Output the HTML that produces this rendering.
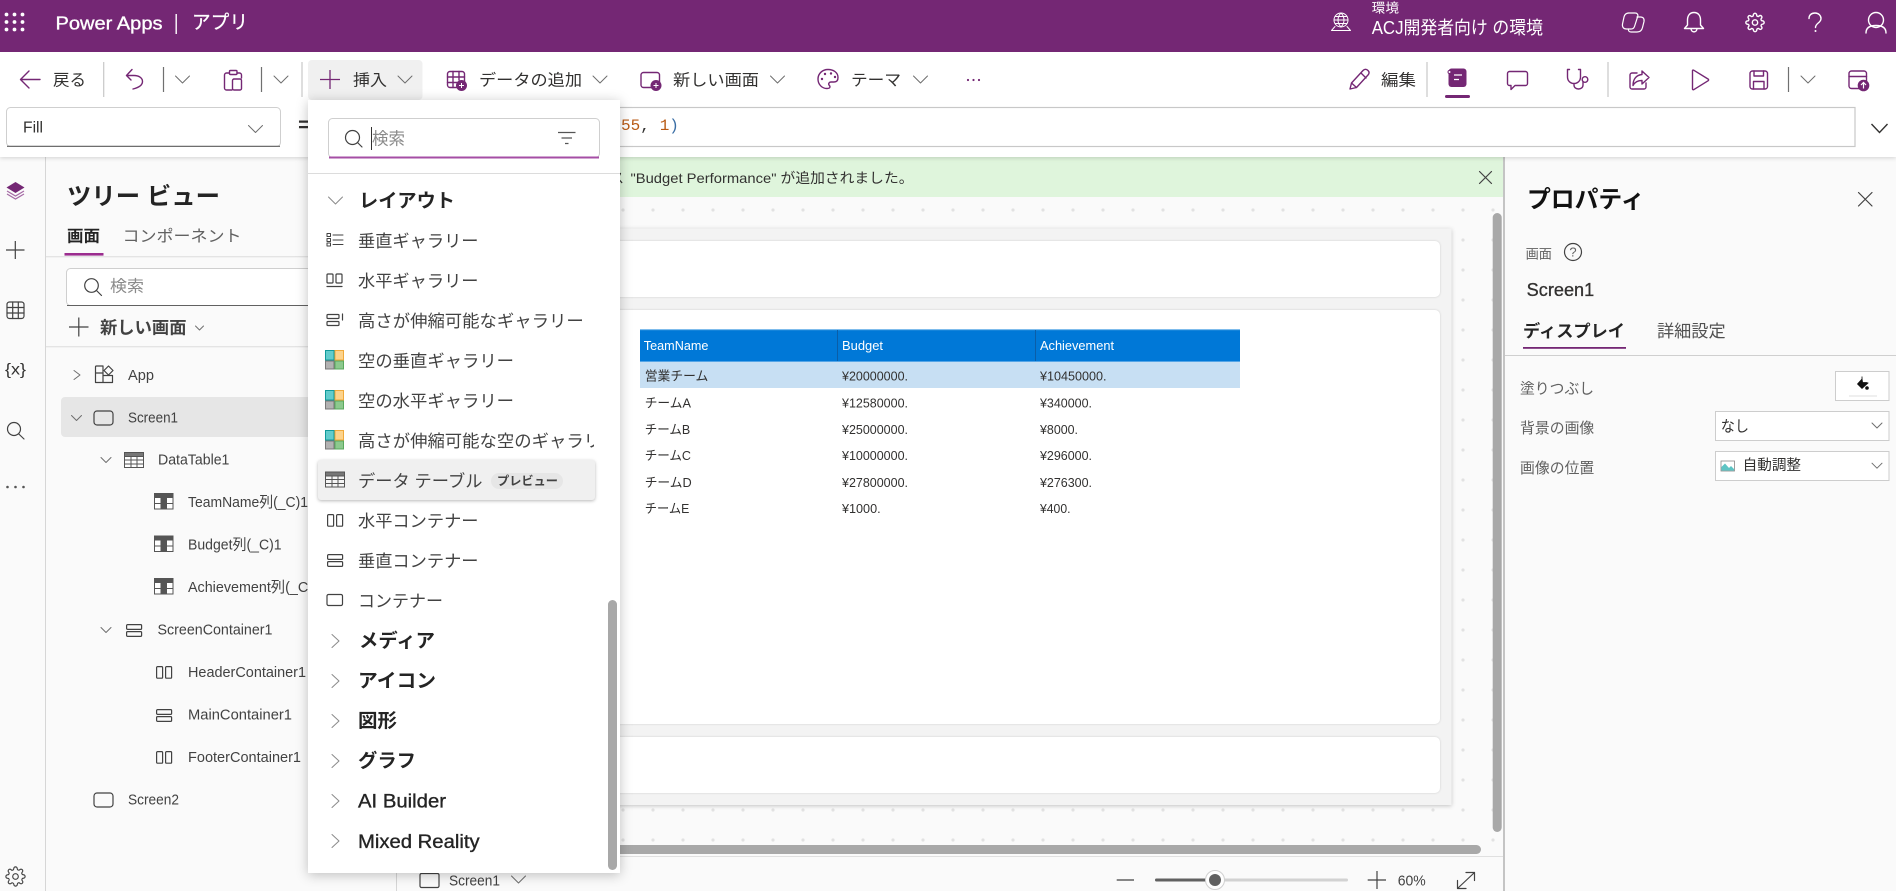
<!DOCTYPE html>
<html lang="ja"><head><meta charset="utf-8"><title>Power Apps</title>
<style>
html,body{margin:0;padding:0;background:#fafafa;width:1896px;height:891px;overflow:hidden}
svg{display:block}
text{font-family:"Liberation Sans","Noto Sans CJK JP",sans-serif;dominant-baseline:central}
.m{font-family:"Liberation Mono","Noto Sans CJK JP",monospace}
.w{fill:#fff}
.b{font-weight:700;fill:#242424}
.g{fill:#616161}
.ph{fill:#8a8a8a}
.i{font-size:17px;fill:#424242}
.h{font-size:19px;font-weight:700;fill:#242424}
.hl{font-size:19px;fill:#242424;stroke:#242424;stroke-width:.35}
.tr{font-size:15px;fill:#424242}
.tb{font-size:16px;fill:#323130}
.td{font-size:13px;fill:#323130}
.th{font-size:13px;fill:#fff}
.s{fill:none;stroke:#742774;stroke-width:1.4;stroke-linecap:round;stroke-linejoin:round}
.sw{fill:none;stroke:#fff;stroke-width:1.4;stroke-linecap:round;stroke-linejoin:round}
.swt{fill:none;stroke:#fff;stroke-width:1;stroke-linecap:round;stroke-linejoin:round}
.d{fill:none;stroke:#424242;stroke-width:1.2;stroke-linecap:round;stroke-linejoin:round}
.c{fill:none;stroke:#6e6e6e;stroke-width:1;stroke-linecap:round;stroke-linejoin:round}
.cl{fill:none;stroke:#8a8a8a;stroke-width:1;stroke-linecap:round;stroke-linejoin:round}
</style></head><body>
<svg width="1896" height="891" viewBox="0 0 1896 891" xmlns="http://www.w3.org/2000/svg" fill="#323130">
<defs>
<pattern id="dots" patternUnits="userSpaceOnUse" x="8" y="15" width="30" height="30"><circle cx="15" cy="15" r="1.6" fill="#e2e2e2"/></pattern>
<path id="cd" d="M-7-3.5L0 3.5L7-3.5"/>
<path id="cds" d="M-5-2.5L0 2.5L5-2.5"/>
<path id="cr" d="M-3.5-6.5L3.500 0L-3.500 6.500"/>
<path id="crs" d="M-3-4.500L3 0L-3 4.500"/>
<symbol id="gear" viewBox="0 0 24 24"><circle cx="12" cy="12" r="3.2"/><path d="M19.4 15a1.65 1.65 0 0 0 .33 1.82l.06.06a2 2 0 0 1 0 2.83 2 2 0 0 1-2.83 0l-.06-.06a1.65 1.65 0 0 0-1.82-.33 1.65 1.65 0 0 0-1 1.51V21a2 2 0 0 1-2 2 2 2 0 0 1-2-2v-.09A1.65 1.65 0 0 0 9 19.4a1.65 1.65 0 0 0-1.82.33l-.06.06a2 2 0 0 1-2.83 0 2 2 0 0 1 0-2.83l.06-.06a1.65 1.65 0 0 0 .33-1.82 1.65 1.65 0 0 0-1.51-1H3a2 2 0 0 1-2-2 2 2 0 0 1 2-2h.09A1.65 1.65 0 0 0 4.6 9a1.65 1.65 0 0 0-.33-1.82l-.06-.06a2 2 0 0 1 0-2.83 2 2 0 0 1 2.83 0l.06.06a1.65 1.65 0 0 0 1.82.33H9a1.65 1.65 0 0 0 1-1.51V3a2 2 0 0 1 2-2 2 2 0 0 1 2 2v.09a1.65 1.65 0 0 0 1 1.51 1.65 1.65 0 0 0 1.82-.33l.06-.06a2 2 0 0 1 2.83 0 2 2 0 0 1 0 2.83l-.06.06a1.65 1.65 0 0 0-.33 1.82V9a1.65 1.65 0 0 0 1.51 1H21a2 2 0 0 1 2 2 2 2 0 0 1-2 2h-.09a1.65 1.65 0 0 0-1.51 1z"/></symbol>
<g id="col"><rect x=".5" y=".5" width="18.5" height="15.5" fill="#fff" stroke="#555"/><rect x="0" y="0" width="19.5" height="5" fill="#555"/><rect x="6.5" y="5" width="6.5" height="11" fill="#555"/><path d="M0 10.5H19.5" stroke="#555" stroke-width="1"/></g>
<g id="tbl" fill="none" stroke="#555" stroke-width="1"><rect x=".5" y=".5" width="19" height="15" fill="#fff"/><rect x=".5" y=".5" width="19" height="4" fill="#777"/><path d="M.5 8h19M.5 12h19M7 4.5v11M13 4.5v11"/></g>
<g id="vc" class="d"><rect x=".6" y=".6" width="15" height="4.8" rx="1"/><rect x=".6" y="7.6" width="15" height="4.8" rx="1"/></g>
<g id="hc" class="d"><rect x=".6" y=".6" width="6" height="11.6" rx="1"/><rect x="9.6" y=".6" width="6" height="11.6" rx="1"/></g>
<g id="eg"><rect x=".5" y=".5" width="8.5" height="9.5" fill="#62cccc" stroke="#119a9a"/><rect x="10" y=".5" width="8.5" height="9.5" fill="#fdd38b" stroke="#f0a93a"/><rect x=".5" y="11" width="8.5" height="8" fill="#b2b2b2" stroke="#777"/><rect x="10" y="11" width="8.5" height="8" fill="#8cc98e" stroke="#5aa95d"/></g>
<clipPath id="clipItem"><rect x="350" y="425" width="244" height="34"/></clipPath>
</defs>

<!-- base panels -->
<rect x="0" y="157" width="1896" height="734" fill="#fafafa"/>
<path d="M45.5 157V891M396.5 857V891" stroke="#d6d6d6"/>
<rect x="397" y="197" width="1107" height="659" fill="#fafafa"/>
<rect x="397" y="197" width="1107" height="659" fill="url(#dots)"/>
<rect x="397" y="157" width="1107" height="40" fill="#dff5dc"/>
<text x="610" y="178" font-size="14" textLength="14" lengthAdjust="spacingAndGlyphs">ス</text>
<text x="630.5" y="178" font-size="14" textLength="283" lengthAdjust="spacingAndGlyphs">"Budget Performance" が追加されました。</text>
<path d="M1479.5 171.5L1491.5 183.5M1491.5 171.5L1479.5 183.5" class="d"/>

<!-- screen frame -->
<rect x="430" y="228.5" width="1021.5" height="576.5" fill="#f3f3f3" style="filter:drop-shadow(0 1px 2px rgba(0,0,0,.22))"/>
<g fill="#fff" style="filter:drop-shadow(0 .5px 1px rgba(0,0,0,.16))">
<rect x="440" y="241" width="1000" height="56" rx="5"/>
<rect x="440" y="310" width="1000" height="414" rx="5"/>
<rect x="440" y="737" width="1000" height="56" rx="5"/>
</g>

<!-- table -->
<rect x="640" y="329.5" width="600" height="32.5" fill="#0078d7"/>
<path d="M640 329.8H1240" stroke="#55a5e6"/><path d="M640 361.5H1240" stroke="#55a5e6"/>
<path d="M837.5 330V361M1035.5 330V361" stroke="#0a5ea8"/>
<rect x="640" y="362" width="600" height="26" fill="#c7dff3"/>
<text class="th" x="643.8" y="345.7" textLength="64.6" lengthAdjust="spacingAndGlyphs">TeamName</text>
<text class="th" x="842" y="345.7" textLength="41" lengthAdjust="spacingAndGlyphs">Budget</text>
<text class="th" x="1040" y="345.7" textLength="74" lengthAdjust="spacingAndGlyphs">Achievement</text>
<text class="td" x="644.7" y="376" textLength="63.7" lengthAdjust="spacingAndGlyphs">営業チーム</text>
<text class="td" x="842" y="376" textLength="66" lengthAdjust="spacingAndGlyphs">¥20000000.</text>
<text class="td" x="1040" y="376" textLength="66.5" lengthAdjust="spacingAndGlyphs">¥10450000.</text>
<text class="td" x="644.7" y="403" textLength="46.3" lengthAdjust="spacingAndGlyphs">チームA</text>
<text class="td" x="842" y="403" textLength="66" lengthAdjust="spacingAndGlyphs">¥12580000.</text>
<text class="td" x="1040" y="403" textLength="52" lengthAdjust="spacingAndGlyphs">¥340000.</text>
<text class="td" x="644.7" y="429.7" textLength="45.5" lengthAdjust="spacingAndGlyphs">チームB</text>
<text class="td" x="842" y="429.7" textLength="66" lengthAdjust="spacingAndGlyphs">¥25000000.</text>
<text class="td" x="1040" y="429.7" textLength="38" lengthAdjust="spacingAndGlyphs">¥8000.</text>
<text class="td" x="644.7" y="455.7" textLength="46.3" lengthAdjust="spacingAndGlyphs">チームC</text>
<text class="td" x="842" y="455.7" textLength="66" lengthAdjust="spacingAndGlyphs">¥10000000.</text>
<text class="td" x="1040" y="455.7" textLength="52" lengthAdjust="spacingAndGlyphs">¥296000.</text>
<text class="td" x="644.7" y="482.7" textLength="47" lengthAdjust="spacingAndGlyphs">チームD</text>
<text class="td" x="842" y="482.7" textLength="66" lengthAdjust="spacingAndGlyphs">¥27800000.</text>
<text class="td" x="1040" y="482.7" textLength="52" lengthAdjust="spacingAndGlyphs">¥276300.</text>
<text class="td" x="644.7" y="508.7" textLength="44.6" lengthAdjust="spacingAndGlyphs">チームE</text>
<text class="td" x="842" y="508.7" textLength="38.6" lengthAdjust="spacingAndGlyphs">¥1000.</text>
<text class="td" x="1040" y="508.7" textLength="30.5" lengthAdjust="spacingAndGlyphs">¥400.</text>

<!-- canvas scrollbars / status -->
<rect x="1492.7" y="213" width="9" height="619" rx="4.5" fill="#a8a8a8"/>
<rect x="560" y="845" width="921" height="9" rx="4.5" fill="#a8a8a8"/>
<rect x="397" y="856" width="1107" height="35" fill="#fafafa"/>
<path d="M397 856.5H1504" stroke="#e0e0e0"/>
<rect x="420" y="873.5" width="19" height="14" rx="1.5" class="d"/>
<text class="tr" x="449" y="881" textLength="51" lengthAdjust="spacingAndGlyphs">Screen1</text>
<use href="#cd" x="518.5" y="879.5" class="c"/>
<path d="M1116.7 880H1134" stroke="#424242" stroke-width="1.2"/>
<rect x="1155" y="878.5" width="193" height="3" rx="1.5" fill="#d2d2d2"/>
<rect x="1155" y="878.5" width="60" height="3" rx="1.5" fill="#616161"/>
<circle cx="1215" cy="880" r="9.5" fill="#fff" stroke="#d0d0d0"/><circle cx="1215" cy="880" r="6" fill="#616161"/>
<path d="M1367.7 880H1386M1377 871V889" stroke="#424242" stroke-width="1.2"/>
<text x="1397.7" y="881" font-size="15" fill="#424242" textLength="28" lengthAdjust="spacingAndGlyphs">60%</text>
<path d="M1457.5 888.5L1474.5 872.5M1466 872.5H1474.5V880.5M1457.5 880.5V888.5H1466" class="d"/>

<!-- right panel -->
<rect x="1504" y="157" width="392" height="734" fill="#fafafa"/>
<path d="M1504 157V891" stroke="#c4c4c4" stroke-width="2"/>
<text x="1527" y="200" font-size="24" class="b" style="fill:#111" textLength="117.6" lengthAdjust="spacingAndGlyphs">プロパティ</text>
<path d="M1858.5 192.5L1872 206M1872 192.5L1858.5 206" class="d"/>
<text x="1525.6" y="254" font-size="13" class="g" textLength="26.4" lengthAdjust="spacingAndGlyphs">画面</text>
<circle cx="1573" cy="252" r="8.5" class="d"/>
<text x="1573" y="252" font-size="13" class="g" text-anchor="middle">?</text>
<text x="1526.7" y="290" font-size="18" fill="#323130" stroke="#323130" stroke-width=".3" textLength="67.5" lengthAdjust="spacingAndGlyphs">Screen1</text>
<text x="1523" y="331.7" font-size="17" class="b" textLength="102" lengthAdjust="spacingAndGlyphs">ディスプレイ</text>
<rect x="1523" y="347" width="103" height="1.8" fill="#742774"/>
<text x="1657" y="331.7" font-size="17" fill="#505050" textLength="68.6" lengthAdjust="spacingAndGlyphs">詳細設定</text>
<path d="M1505 355.5H1896" stroke="#cfcfcf"/>
<text x="1520" y="389" font-size="15" class="g" textLength="74" lengthAdjust="spacingAndGlyphs">塗りつぶし</text>
<text x="1520" y="428.3" font-size="15" class="g" textLength="74.3" lengthAdjust="spacingAndGlyphs">背景の画像</text>
<text x="1520" y="468.3" font-size="15" class="g" textLength="74.3" lengthAdjust="spacingAndGlyphs">画像の位置</text>
<rect x="1835.5" y="371.5" width="53.5" height="29" fill="#fff" stroke="#cdcdcd"/>
<rect x="1849" y="395" width="28" height="2" fill="#efefef"/>
<path d="M1862 376.500v2.500l-4.500 5 4.500 4.500 6-5.500-1.500-.5h-3.500M1862 376.500v5" fill="#111" stroke="#111" stroke-width=".8"/><circle cx="1867" cy="388" r="1.8" fill="#111"/>
<rect x="1715.5" y="411.5" width="173.5" height="29" fill="#fff" stroke="#cdcdcd"/>
<text x="1720.7" y="427" font-size="15.5" fill="#323130" textLength="28.3" lengthAdjust="spacingAndGlyphs">なし</text>
<use href="#cds" x="1877" y="425.5" class="c"/>
<rect x="1715.5" y="451.5" width="173.5" height="29" fill="#fff" stroke="#cdcdcd"/>
<rect x="1721" y="461" width="13.5" height="10" fill="#fff" stroke="#888" stroke-width=".8"/>
<path d="M1721.4 470.6V467L1725 463.5L1729 468L1731 466L1734 469V470.6z" fill="#5ec4c4"/>
<text x="1742.7" y="466" font-size="14.5" fill="#323130" textLength="58.3" lengthAdjust="spacingAndGlyphs">自動調整</text>
<use href="#cds" x="1877" y="465.7" class="c"/>

<!-- left rail -->
<path d="M15.5 182L24.5 187.5L15.5 193L6.5 187.5z" fill="#742774"/>
<path d="M7 191L15.5 196L24 191M7 194L15.5 199L24 194" fill="none" stroke="#a56aa5" stroke-width="1.2"/>
<path d="M6 250H24.5M15.3 241V259" stroke="#424242" stroke-width="1.2"/>
<g class="d"><rect x="7" y="302" width="17" height="16.5" rx="2.5"/><path d="M7 307.5H24M7 313H24M12.7 302V318.5M18.3 302V318.5"/></g>
<text x="5" y="370" font-size="16" fill="#323130" textLength="21" lengthAdjust="spacingAndGlyphs">{x}</text>
<circle cx="14" cy="429" r="6.5" class="d"/><path d="M18.8 434L24 439" class="d"/>
<g fill="#555"><circle cx="7.5" cy="487" r="1.3"/><circle cx="15.5" cy="487" r="1.3"/><circle cx="23.5" cy="487" r="1.3"/></g>
<use href="#gear" x="5" y="866" width="21" height="21" fill="none" stroke="#424242" stroke-width="1.3"/>

<!-- tree panel -->
<text x="67" y="197" font-size="24" class="b" textLength="153" lengthAdjust="spacingAndGlyphs">ツリー ビュー</text>
<text x="67" y="237" font-size="16" class="b" textLength="33" lengthAdjust="spacingAndGlyphs">画面</text>
<text x="122.5" y="237" font-size="16" fill="#616161" textLength="119" lengthAdjust="spacingAndGlyphs">コンポーネント</text>
<rect x="64.5" y="253" width="39" height="2.6" fill="#9b2d8f"/>
<path d="M46 256.7H320" stroke="#dcdcdc"/>
<rect x="66.5" y="268.5" width="280" height="37" rx="4" fill="#fff" stroke="#cfcfcf"/><path d="M67 305.5H340" stroke="#616161"/>
<circle cx="91.5" cy="285.5" r="6.8" class="d"/><path d="M96.5 290.5L101.5 295.5" class="d"/>
<text x="110" y="287" font-size="16" class="ph" textLength="34" lengthAdjust="spacingAndGlyphs">検索</text>
<path d="M69 327H88.5M78.8 317.5V336.5" stroke="#424242" stroke-width="1.2"/>
<text x="100" y="328" font-size="17" class="b" style="fill:#424242" textLength="86.5" lengthAdjust="spacingAndGlyphs">新しい画面</text>
<path d="M195.500 326l4 4 4-4" class="c"/>
<path d="M46 346.7H320" stroke="#dcdcdc"/>

<use href="#crs" x="77" y="375" class="c"/>
<g class="d"><path d="M95.500 373h7.500v9.500h-7.500zM95.500 373v-6a1 1 0 0 1 1-1h6.500v7M103 375.500h9.500v7h-9.500"/><path d="M108.500 366l4.500 4.500-4.500 4.500-4.500-4.500z"/></g>
<text class="tr" x="128" y="375.7" textLength="26" lengthAdjust="spacingAndGlyphs">App</text>
<rect x="61" y="397" width="260" height="40" rx="4" fill="#e6e6e6"/>
<use href="#cds" x="76.5" y="418" class="c"/>
<rect x="94" y="411" width="19" height="14" rx="3" class="d"/>
<text class="tr" x="128" y="418" textLength="50" lengthAdjust="spacingAndGlyphs">Screen1</text>
<use href="#cds" x="106" y="460" class="c"/>
<use href="#tbl" x="124" y="452"/>
<text class="tr" x="158" y="460" textLength="71.4" lengthAdjust="spacingAndGlyphs">DataTable1</text>
<use href="#col" x="154" y="493"/>
<text class="tr" x="188" y="502.7" textLength="120" lengthAdjust="spacingAndGlyphs">TeamName列(_C)1</text>
<use href="#col" x="154" y="535.5"/>
<text class="tr" x="188" y="545" textLength="93.6" lengthAdjust="spacingAndGlyphs">Budget列(_C)1</text>
<use href="#col" x="154" y="578"/>
<text class="tr" x="188" y="587.3" textLength="125" lengthAdjust="spacingAndGlyphs">Achievement列(_C)</text>
<use href="#cds" x="106" y="630" class="c"/>
<use href="#vc" x="126" y="624"/>
<text class="tr" x="157.5" y="630" textLength="115" lengthAdjust="spacingAndGlyphs">ScreenContainer1</text>
<use href="#hc" x="156" y="666"/>
<text class="tr" x="188" y="672.7" textLength="118" lengthAdjust="spacingAndGlyphs">HeaderContainer1</text>
<use href="#vc" x="156" y="709"/>
<text class="tr" x="188" y="715" textLength="104" lengthAdjust="spacingAndGlyphs">MainContainer1</text>
<use href="#hc" x="156" y="751"/>
<text class="tr" x="188" y="757.7" textLength="113" lengthAdjust="spacingAndGlyphs">FooterContainer1</text>
<rect x="94" y="793" width="19" height="14" rx="3" class="d"/>
<text class="tr" x="128" y="800" textLength="51" lengthAdjust="spacingAndGlyphs">Screen2</text>

<!-- toolbar -->
<rect x="0" y="52" width="1896" height="105" fill="#fff" style="filter:drop-shadow(0 1px 2px rgba(0,0,0,.16))"/>
<rect x="0" y="0" width="1896" height="52" fill="#742774"/>
<g fill="#fff"><circle cx="6.5" cy="14.5" r="1.9"/><circle cx="14.5" cy="14.5" r="1.9"/><circle cx="22.5" cy="14.5" r="1.9"/><circle cx="6.5" cy="22" r="1.9"/><circle cx="14.5" cy="22" r="1.9"/><circle cx="22.5" cy="22" r="1.9"/><circle cx="6.5" cy="29.5" r="1.9"/><circle cx="14.5" cy="29.5" r="1.9"/><circle cx="22.5" cy="29.5" r="1.9"/></g>
<text x="55.5" y="23" font-size="18.5" class="w" stroke="#fff" stroke-width=".35" textLength="107" lengthAdjust="spacingAndGlyphs">Power Apps</text>
<rect x="175.5" y="14" width="1.4" height="20" fill="#fff"/>
<text x="192" y="23" font-size="19" class="w" stroke="#fff" stroke-width=".25" textLength="56" lengthAdjust="spacingAndGlyphs">アプリ</text>
<g class="swt"><circle cx="1341" cy="20" r="7"/><path d="M1334 20h14M1341 13c-4 4-4 10 0 14M1341 13c4 4 4 10 0 14M1335.500 16.500h11M1335.500 23.500h11M1335 26.500l-3.500 4h19l-3.500-4"/></g>
<text x="1371.7" y="8" font-size="13" class="w" textLength="27.3" lengthAdjust="spacingAndGlyphs">環境</text>
<text x="1371.7" y="28" font-size="18" class="w" textLength="171.3" lengthAdjust="spacingAndGlyphs">ACJ開発者向け の環境</text>
<g class="swt" style="stroke-width:1.2"><path d="M1628 13h7c2.200 0 3.300 1.500 2.800 3.200l-3.300 10.300c-.5 1.500-2 2.500-3.500 2.500h-4.500c-3 0-4.500-2-4-5l1.500-7c.7-3 2.500-4 5-4z"/><path d="M1637 17h3.500c2.500 0 4 1.500 3.500 4.500l-1.500 6c-.7 3-2.500 4.500-5.500 4.500h-6c-2 0-3-1.500-2.500-3"/></g>
<path d="M1694 12.500c-4.500 0-6.500 3.500-6.500 7.500v5l-3 3.500h19l-3-3.500v-5c0-4-2-7.500-6.500-7.500zM1691 28.500c0 4.500 6 4.500 6 0" class="sw"/>
<use href="#gear" x="1745" y="12.500" width="20" height="20" class="sw" style="stroke-width:1.7"/>
<path d="M1809 18.500c0-3.500 2.500-5.500 6-5.500s6 2.500 6 5.500c0 4.500-5.500 4.500-5.500 9" class="sw"/><circle cx="1815.5" cy="31" r="1" fill="#fff"/>
<circle cx="1876" cy="20" r="7.5" class="sw"/><path d="M1866 33c0-6 4.500-7.500 10-7.500s10 1.500 10 7.500" class="sw"/>

<!-- toolbar content -->
<path d="M40 79.5H21M29 71L20.5 79.5L29 88" class="s"/>
<text class="tb" x="53" y="81" textLength="33" lengthAdjust="spacingAndGlyphs">戻る</text>
<path d="M103.7 62V97M302 62V97" stroke="#c8c8c8" stroke-width="1.2"/>
<path d="M132 69.5L126.500 75.500H134C139 75.500 142.500 78 142.500 81.500C142.500 85 139 87.500 133 89M126.500 75.500L131 80" class="s"/>
<path d="M163.500 67V92M261.500 67V92" stroke="#707070" stroke-width="1.2"/>
<use href="#cd" x="182.5" y="79.5" class="c"/>
<g class="s"><path d="M229 73h-2.500a2 2 0 0 0-2 2v13a2 2 0 0 0 2 2H232M237 73h2.500a2 2 0 0 1 2 2v3"/><rect x="229.5" y="70.5" width="7.5" height="4" rx="1"/><rect x="232.5" y="79" width="9" height="11" rx="1.5"/></g>
<use href="#cd" x="281" y="79.5" class="c"/>
<rect x="308" y="60" width="114.5" height="40" rx="4" fill="#f0f0f0"/>
<path d="M320 79.5H340M330 70V89" stroke="#742774" stroke-width="1.3"/>
<text class="tb" x="353" y="81" textLength="34" lengthAdjust="spacingAndGlyphs">挿入</text>
<use href="#cd" x="405" y="79.5" class="c"/>
<g class="s"><rect x="447.5" y="71.5" width="17" height="16" rx="2.5"/><path d="M447.5 77H464.500M447.5 82.500H458M453 71.500V87.500M459 71.500V80"/></g>
<circle cx="461.5" cy="85.5" r="5.5" fill="#742774"/><path d="M459 85.5h5M461.5 83v5" stroke="#fff" stroke-width="1"/>
<text class="tb" x="479" y="81" textLength="103" lengthAdjust="spacingAndGlyphs">データの追加</text>
<use href="#cd" x="600" y="79.5" class="c"/>
<rect x="641" y="72.5" width="18.5" height="15" rx="2.5" class="s"/>
<circle cx="656" cy="85.5" r="5.5" fill="#742774"/><path d="M653.5 85.5h5M656 83v5" stroke="#fff" stroke-width="1"/>
<text class="tb" x="673" y="81" textLength="86" lengthAdjust="spacingAndGlyphs">新しい画面</text>
<use href="#cd" x="777.5" y="79.5" class="c"/>
<path d="M828 69.5c-5.500 0-10 4-10 9.500 0 5.500 4 9.500 9 9.500 3.500 0 3.500-2 2-3.500-1-1.500.5-3 2-3h3c3 0 4-2 4-4.500 0-5-4.500-8-10-8z" class="s"/>
<g fill="#742774"><circle cx="822" cy="79" r="1.2"/><circle cx="825" cy="74" r="1.2"/><circle cx="831" cy="73.5" r="1.2"/><circle cx="835" cy="77" r="1.2"/></g>
<text class="tb" x="851" y="81" textLength="50" lengthAdjust="spacingAndGlyphs">テーマ</text>
<use href="#cd" x="920.5" y="79.5" class="c"/>
<g fill="#742774"><circle cx="968" cy="80" r="1.1"/><circle cx="973.5" cy="80" r="1.1"/><circle cx="979" cy="80" r="1.1"/></g>

<path d="M1350 89l1.500-6 11.500-12.500c1.500-1.500 3.500-1.500 5 0s1.200 3.200 0 4.500L1356.500 87.500zM1361 73l5 5M1351.500 83l5 4.500" class="s"/>
<text class="tb" x="1381" y="81" textLength="35" lengthAdjust="spacingAndGlyphs">編集</text>
<path d="M1427 62V97M1608 62V97" stroke="#c8c8c8" stroke-width="1.2"/>
<rect x="1448.5" y="68.5" width="18" height="18.5" rx="3" fill="#742774"/><circle cx="1449.5" cy="72" r="1.5" fill="#fff" stroke="#742774"/><path d="M1454 75h8M1454 79.5h5" stroke="#fff" stroke-width="1.2"/>
<rect x="1445" y="95" width="25" height="3" rx="1.5" fill="#742774"/>
<path d="M1509.5 71.5h16a2 2 0 0 1 2 2v10a2 2 0 0 1-2 2h-10.500L1511 89.500V85.500h-1.500a2 2 0 0 1-2-2v-10a2 2 0 0 1 2-2z" class="s"/>
<path d="M1569.5 69.5H1567.5V77c0 4 3 6.500 6.500 6.500s6.500-2.500 6.500-6.500V69.500H1578.500M1574 83.500V85c0 2.500 2 4 4.500 4s4.500-1.500 4.500-4V82" class="s"/><circle cx="1585" cy="79.5" r="2.8" class="s"/>
<path d="M1637 73h-5a2 2 0 0 0-2 2v12a2 2 0 0 0 2 2h12a2 2 0 0 0 2-2v-4M1642 71l7 6.500-7 6.500v-3.500c-4 0-7 1-9 5 0-6 3-10.500 9-11z" class="s"/>
<path d="M1692.5 71.500v17.500a.8.8 0 0 0 1.200.7l14.500-9a1 1 0 0 0 0-1.600l-14.500-8.900a.8.8 0 0 0-1.200.3z" class="s"/>
<g class="s"><rect x="1750" y="71" width="17.5" height="18" rx="2.5"/><path d="M1754 71v5h9.500v-5M1753.500 89v-7.500h10.500V89"/></g>
<path d="M1788.5 67V92" stroke="#707070" stroke-width="1.2"/>
<use href="#cd" x="1808" y="79.5" class="c"/>
<g class="s"><rect x="1849" y="71" width="17.5" height="17.5" rx="2.5"/><path d="M1849 76.500H1866.500"/></g>
<circle cx="1863.5" cy="85.5" r="5.8" fill="#742774"/><path d="M1863.5 88.500V83M1861 85l2.500-2.500 2.500 2.500" fill="none" stroke="#fff" stroke-width="1.2"/>

<!-- formula bar -->
<rect x="320" y="107.5" width="1535" height="39" fill="#fff" stroke="#c8c8c8" stroke-width="1.2"/>
<rect x="6.5" y="107.5" width="274" height="39" rx="4" fill="#fff" stroke="#cfcfcf"/>
<path d="M7 146.300H280" stroke="#616161" stroke-width="1.2"/>
<text x="23" y="128" font-size="16" fill="#323130" textLength="20" lengthAdjust="spacingAndGlyphs">Fill</text>
<use href="#cd" x="255.5" y="129" class="c"/>
<text class="m" x="298" y="127" font-size="20" font-weight="700" fill="#323130">=</text>
<text class="m" x="621" y="126" font-size="16" fill="#b85a14">55</text>
<text class="m" x="640.2" y="126" font-size="16" fill="#323130">,</text>
<text class="m" x="659.7" y="126" font-size="16" fill="#b85a14">1</text>
<text class="m" x="669.3" y="126" font-size="16" fill="#3a6ea5">)</text>
<path d="M1871.5 124L1879.500 132.500L1887.500 124" fill="none" stroke="#323130" stroke-width="1.4"/>

<!-- insert menu -->
<rect x="308" y="100" width="312" height="773" fill="#fff" style="filter:drop-shadow(0 2px 6px rgba(0,0,0,.24))"/>
<rect x="328.5" y="118.5" width="271" height="39" rx="4" fill="#fff" stroke="#cfcfcf"/>
<path d="M329 157.500H599" stroke="#a54ea5" stroke-width="2"/>
<circle cx="352.5" cy="137.5" r="7" class="d"/><path d="M357.5 142.500L362 147" class="d"/>
<path d="M371.5 127V150" stroke="#323130"/>
<text x="372" y="139" font-size="17" class="ph" textLength="33" lengthAdjust="spacingAndGlyphs">検索</text>
<path d="M558 132.500H575.500M561.500 138H572M565 143.500H568.500" stroke="#555" stroke-width="1.2"/>
<path d="M308 173.500H620" stroke="#dcdcdc"/>

<use href="#cd" x="335.5" y="200.5" class="cl"/>
<text class="h" x="359" y="201.7" textLength="96" lengthAdjust="spacingAndGlyphs">レイアウト</text>

<g class="d" style="stroke-width:1"><rect x="327" y="233.5" width="3.5" height="3"/><rect x="327" y="238.5" width="3.5" height="3"/><rect x="327" y="243" width="3.5" height="3"/><path d="M333 235H343M333 240H343M333 244.500H343"/></g>
<text class="i" x="358" y="241.7" textLength="120.5" lengthAdjust="spacingAndGlyphs">垂直ギャラリー</text>

<g class="d"><rect x="327" y="274" width="6" height="9" rx="1"/><rect x="336" y="274" width="6" height="9" rx="1"/><path d="M327 286.500H342"/></g>
<text class="i" x="358" y="281.7" textLength="120.5" lengthAdjust="spacingAndGlyphs">水平ギャラリー</text>

<g class="d"><rect x="327" y="314.5" width="12" height="4" rx="1"/><rect x="327" y="321.5" width="12" height="4" rx="1"/><path d="M342.500 314V320"/></g>
<text class="i" x="358" y="321.7" textLength="225.7" lengthAdjust="spacingAndGlyphs">高さが伸縮可能なギャラリー</text>

<use href="#eg" x="325" y="350"/>
<text class="i" x="358" y="361.7" textLength="156" lengthAdjust="spacingAndGlyphs">空の垂直ギャラリー</text>
<use href="#eg" x="325" y="390"/>
<text class="i" x="358" y="401.7" textLength="156" lengthAdjust="spacingAndGlyphs">空の水平ギャラリー</text>
<use href="#eg" x="325" y="430"/>
<g clip-path="url(#clipItem)"><text class="i" x="358" y="441.7" textLength="260.4" lengthAdjust="spacingAndGlyphs">高さが伸縮可能な空のギャラリー</text></g>

<rect x="318" y="460" width="277" height="40" rx="3" fill="#f0f0f0" style="filter:drop-shadow(0 1px 1.5px rgba(0,0,0,.28))"/>
<g fill="none" stroke="#555" stroke-width="1"><rect x="325.5" y="472" width="19" height="15" fill="#f5f5f5"/><rect x="325.5" y="472" width="19" height="4" fill="#777"/><path d="M325.500 479.500h19M325.500 483.500h19M332 476v11M338 476v11"/></g>
<text class="i" x="358" y="481.7" textLength="124.5" lengthAdjust="spacingAndGlyphs">データ テーブル</text>
<rect x="491" y="473" width="72" height="16" rx="8" fill="#e6e6e6"/>
<text x="497" y="481" font-size="12" font-weight="700" fill="#424242" textLength="61" lengthAdjust="spacingAndGlyphs">プレビュー</text>

<use href="#hc" x="327" y="514"/>
<text class="i" x="358" y="521.7" textLength="120.5" lengthAdjust="spacingAndGlyphs">水平コンテナー</text>
<use href="#vc" x="327" y="554"/>
<text class="i" x="358" y="561.7" textLength="120.5" lengthAdjust="spacingAndGlyphs">垂直コンテナー</text>
<rect x="327" y="594.5" width="15.5" height="11" rx="1.5" class="d"/>
<text class="i" x="358" y="601.7" textLength="85" lengthAdjust="spacingAndGlyphs">コンテナー</text>

<g class="cl">
<use href="#cr" x="335.5" y="641"/><use href="#cr" x="335.5" y="681"/><use href="#cr" x="335.5" y="721"/><use href="#cr" x="335.5" y="761"/><use href="#cr" x="335.5" y="801"/><use href="#cr" x="335.5" y="841"/>
</g>
<text class="h" x="359" y="641.7" textLength="76" lengthAdjust="spacingAndGlyphs">メディア</text>
<text class="h" x="358" y="681.7" textLength="78" lengthAdjust="spacingAndGlyphs">アイコン</text>
<text class="h" x="358" y="721.7" textLength="39" lengthAdjust="spacingAndGlyphs">図形</text>
<text class="h" x="358" y="761.7" textLength="58" lengthAdjust="spacingAndGlyphs">グラフ</text>
<text class="hl" x="358" y="802" textLength="88" lengthAdjust="spacingAndGlyphs">AI Builder</text>
<text class="hl" x="358" y="842.3" textLength="121.6" lengthAdjust="spacingAndGlyphs">Mixed Reality</text>
<rect x="608" y="600" width="9" height="270" rx="4.5" fill="#a8a8a8"/>
</svg>
</body></html>
